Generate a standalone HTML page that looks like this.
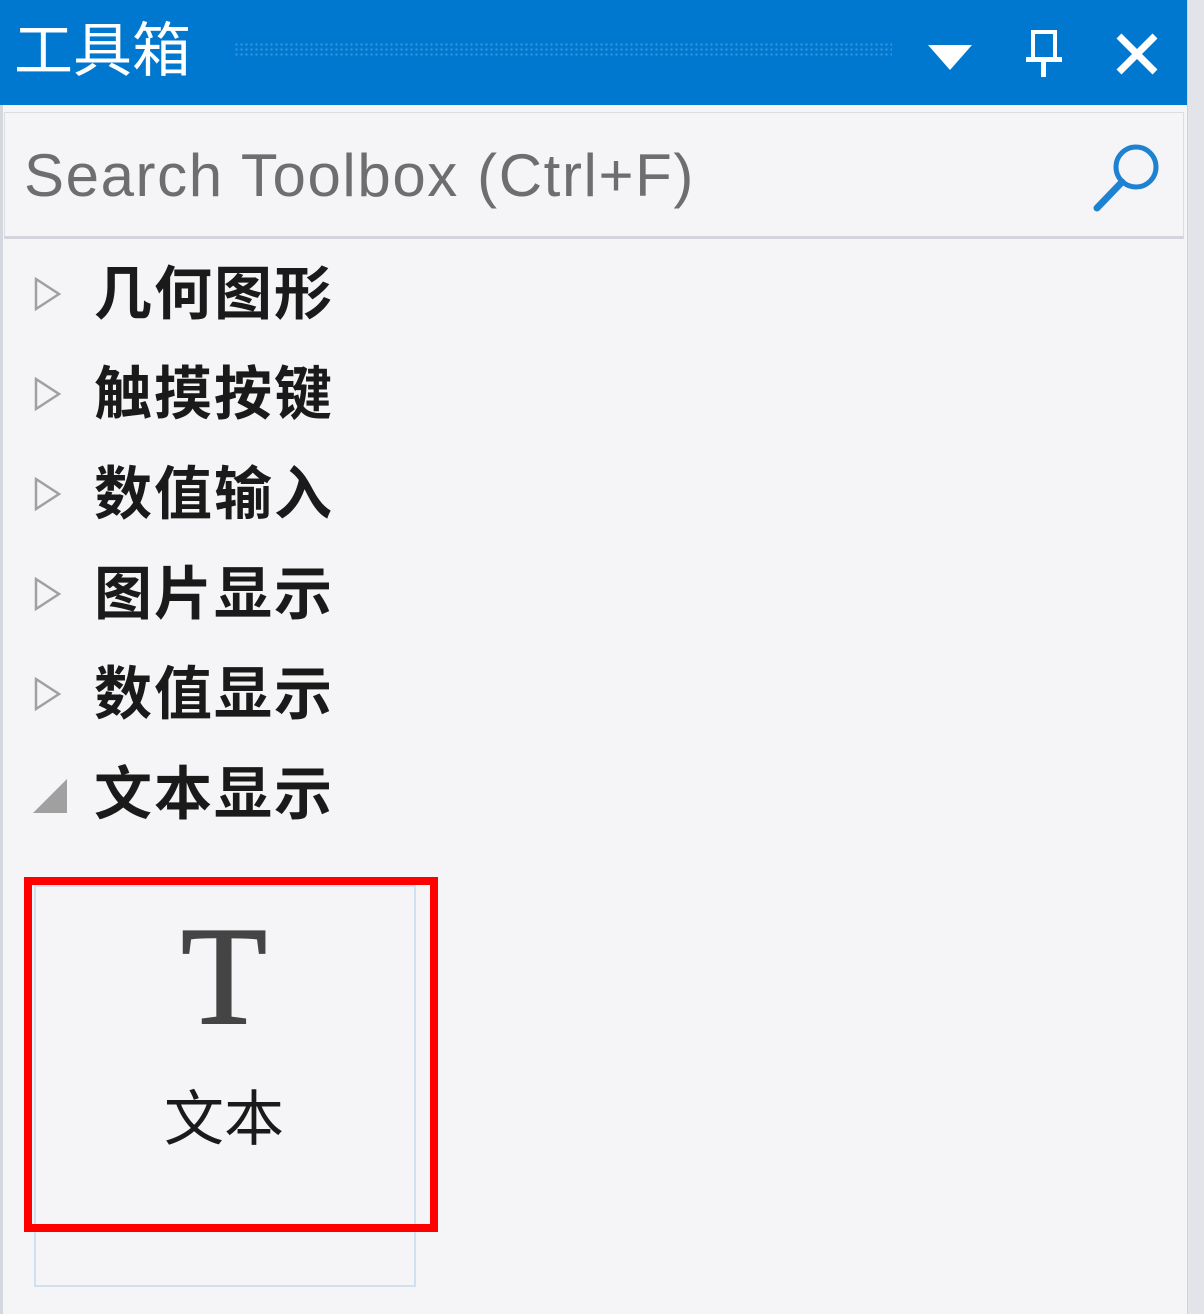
<!DOCTYPE html>
<html><head><meta charset="utf-8"><style>
body{margin:0;width:1204px;height:1314px;overflow:hidden;background:#f5f5f8;position:relative;font-family:"Liberation Sans","Noto Sans CJK SC",sans-serif}
.abs{position:absolute}
.hdr{left:0;top:0;width:1187px;height:105px;background:#0078cf}
.title{left:14px;top:16px;font-size:59px;color:#fff;line-height:70px}
.dots{left:234px;top:42px;width:658px;height:16px;background-image:radial-gradient(circle,#3b97dd 1px,transparent 1.3px);background-size:5px 5px}
.rs{left:1187px;top:0;width:17px;height:1314px;background:#e3e4ea;border-left:1px solid #d0d2da}
.ls{left:0;top:105px;width:3px;height:1209px;background:#d5d7df}
.search{left:4px;top:112px;width:1178px;height:123px;background:#f5f5f7;border:1px solid #dcdde3;border-bottom:3px solid #d3d4dc}
.stext{left:24px;top:138px;font-size:60px;color:#6e6e6e;line-height:76px;letter-spacing:1.6px}
.item{left:94px;font-size:58px;font-weight:bold;color:#1a1a1a;line-height:70px;letter-spacing:2px}
</style></head><body>
<div class="abs hdr"></div>
<div class="abs title">工具箱</div>
<div class="abs dots"></div>
<svg class="abs" style="left:0;top:0" width="1204" height="105">
<polygon points="928,45 972,45 950,70" fill="#fff"/>
<rect x="1033" y="32" width="22" height="27" fill="none" stroke="#fff" stroke-width="4"/>
<rect x="1026" y="57" width="36" height="5" fill="#fff"/>
<rect x="1041" y="60" width="5" height="17" fill="#fff"/>
<path d="M1119 36 L1155 72 M1155 36 L1119 72" stroke="#fff" stroke-width="7"/>
</svg>
<div class="abs rs"></div>
<div class="abs ls"></div>
<div class="abs search"></div>
<div class="abs stext">Search Toolbox (Ctrl+F)</div>
<svg class="abs" style="left:1085px;top:135px" width="90" height="90">
<circle cx="51" cy="32" r="20" fill="none" stroke="#1e82d2" stroke-width="5"/>
<path d="M37 47 L12 73" stroke="#1e82d2" stroke-width="7" stroke-linecap="round"/>
</svg>
<svg class="abs" style="left:0;top:240px" width="80" height="600">
<g fill="none" stroke="#a0a0a0" stroke-width="2.5">
<polygon points="36,39 36,69 59,54"/>
<polygon points="36,139 36,169 59,154"/>
<polygon points="36,239 36,269 59,254"/>
<polygon points="36,339 36,369 59,354"/>
<polygon points="36,439 36,469 59,454"/>
</g>
<polygon points="33,573 67,539 67,573" fill="#a0a0a0"/>
</svg>
<div class="abs item" style="top:260px">几何图形</div>
<div class="abs item" style="top:360px">触摸按键</div>
<div class="abs item" style="top:460px">数值输入</div>
<div class="abs item" style="top:560px">图片显示</div>
<div class="abs item" style="top:660px">数值显示</div>
<div class="abs item" style="top:760px">文本显示</div>
<div class="abs" style="left:34px;top:885px;width:378px;height:398px;border:2px solid #cfe0f2"></div>
<div class="abs" style="left:24px;top:877px;width:398px;height:339px;border:8px solid #f00"></div>
<div class="abs" style="left:124px;top:902px;width:200px;text-align:center;font-family:'Liberation Serif',serif;font-size:140px;line-height:150px;color:#444;-webkit-text-stroke:2px #444">T</div>
<div class="abs" style="left:124px;top:1082px;width:200px;text-align:center;font-size:60px;line-height:76px;color:#1a1a1a">文本</div>
</body></html>
